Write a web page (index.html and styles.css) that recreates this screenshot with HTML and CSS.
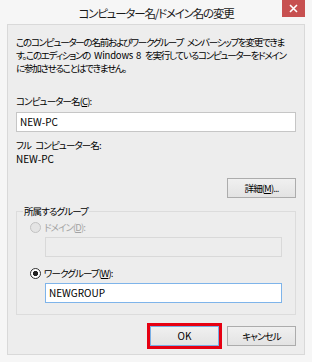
FILE: index.html
```html
<!DOCTYPE html>
<html lang="ja">
<head>
<meta charset="utf-8">
<title>コンピューター名/ドメイン名の変更</title>
<link rel="stylesheet" href="styles.css">
</head>
<body>
<div class="window">
  <div class="titlebar">
    <h1 class="title">コンピューター名/ドメイン名の変更</h1>
    <button class="close" aria-label="閉じる">
      <svg width="9" height="9" viewBox="0 0 9 9"><path d="M1 1L8 8M8 1L1 8" stroke="#fff" stroke-width="1.6" fill="none"/></svg>
    </button>
  </div>
  <div class="panel">
    <p class="desc">
      <span>このコンピューターの名前およびワークグループ メンバーシップを変更できま</span>
      <span>す。このエディションの <span class="latin">Windows 8</span> を実行しているコンピューターをドメイン</span>
      <span>に参加させることはできません。</span>
    </p>
    <div class="label">コンピューター名(<u>C</u>):</div>
    <div class="input latin">NEW-PC</div>
    <div class="label full">フル コンピューター名:</div>
    <div class="value latin">NEW-PC</div>
    <div class="row-end"><button class="btn">詳細(<u>M</u>)...</button></div>
    <fieldset class="group">
      <legend>所属するグループ</legend>
      <div class="radio-row disabled"><span class="radio"></span>ドメイン(<u>D</u>):</div>
      <div class="input indent disabled-input"></div>
      <div class="radio-row second"><span class="radio checked"></span>ワークグループ(<u>W</u>):</div>
      <div class="input indent focus latin">NEWGROUP</div>
    </fieldset>
    <div class="actions">
      <button class="btn default latin">OK</button>
      <button class="btn">キャンセル</button>
    </div>
  </div>
</div>
</body>
</html>
```
FILE: styles.css
```css
* { box-sizing: border-box; }
body {
  margin: 0;
  background: #f6f6f6;
  font-family: "Noto Sans CJK JP", "Noto Sans", sans-serif;
  font-feature-settings: "palt";
  font-size: 9.5px;
  letter-spacing: -0.9px;
  word-spacing: 3px;
  color: #000;
}
.latin { font-size: 10px; letter-spacing: 0; word-spacing: 0; }
.desc .latin { display: inline; font-size: 9.5px; letter-spacing: -0.2px; word-spacing: 1px; }
.window {
  width: 312px;
  height: 362px;
  display: flex;
  flex-direction: column;
}
.titlebar {
  height: 24px;
  display: grid;
  grid-template-columns: 1fr auto 1fr;
  align-items: start;
  padding: 0 7px;
}
.title {
  grid-column: 2;
  margin: 0;
  font-size: 11.5px;
  letter-spacing: -1.2px;
  font-weight: normal;
  line-height: 26px;
  white-space: nowrap;
  color: #1a1a1a;
}
.close {
  grid-column: 3;
  justify-self: end;
  width: 23px;
  height: 17px;
  border: 0;
  padding: 0;
  background: #c75050;
  display: flex;
  align-items: center;
  justify-content: center;
}
.panel {
  flex: 1;
  margin: 0 7px 7px;
  border: 1px solid #d9d9d9;
  background: #ededed;
  padding: 11px 8px 0;
}
.desc { margin: 0; line-height: 13px; letter-spacing: -1.25px; }
.desc > span { display: block; white-space: nowrap; }
.label { margin-top: 20px; line-height: 13px; }
.full { margin-top: 7px; }
.value { line-height: 13px; }
u { text-underline-offset: 1px; }
.input {
  margin-top: 4px;
  height: 20px;
  border: 1px solid #c6c6c6;
  background: #fff;
  padding-left: 3px;
  line-height: 18px;
}
.row-end { display: flex; justify-content: flex-end; margin-top: 13px; }
.btn {
  width: 69px;
  height: 20px;
  padding: 0;
  border: 1px solid #acacac;
  background: linear-gradient(#f0f0f0, #e3e3e3);
  font-family: inherit;
  font-size: 9.5px;
  letter-spacing: -0.9px;
  font-feature-settings: "palt";
  color: #000;
  line-height: 18px;
}
.btn.latin { font-size: 10px; letter-spacing: 0; }
.group {
  margin: 7px 0 0;
  border: 1px solid #dcdcdc;
  padding: 3px 13px 11px 6px;
  min-width: 0;
}
.group legend { padding: 0 1px; line-height: 13px; }
.radio-row {
  display: flex;
  align-items: center;
  line-height: 13px;
  padding-left: 7px;
}
.radio-row.second { margin-top: 10px; }
.radio {
  width: 11px;
  height: 11px;
  border-radius: 50%;
  border: 1px solid #333;
  background: #fff;
  margin-right: 3px;
  flex: none;
}
.radio.checked { background: radial-gradient(circle, #222 0 2.4px, #fff 2.9px); }
.disabled { color: #a3a3a3; }
.disabled .radio { border-color: #c2c2c2; background: #e4e4e4; }
.indent { margin-left: 22px; margin-top: 3px; }
.disabled-input { background: #ededed; border-color: #d9d9d9; }
.focus { border-color: #7eb4ea; }
.actions {
  display: flex;
  justify-content: flex-end;
  gap: 8px;
  margin-top: 11px;
}
.default {
  border-color: #78aee5;
  outline: 3px solid #e60012;
  outline-offset: 0;
}
```
